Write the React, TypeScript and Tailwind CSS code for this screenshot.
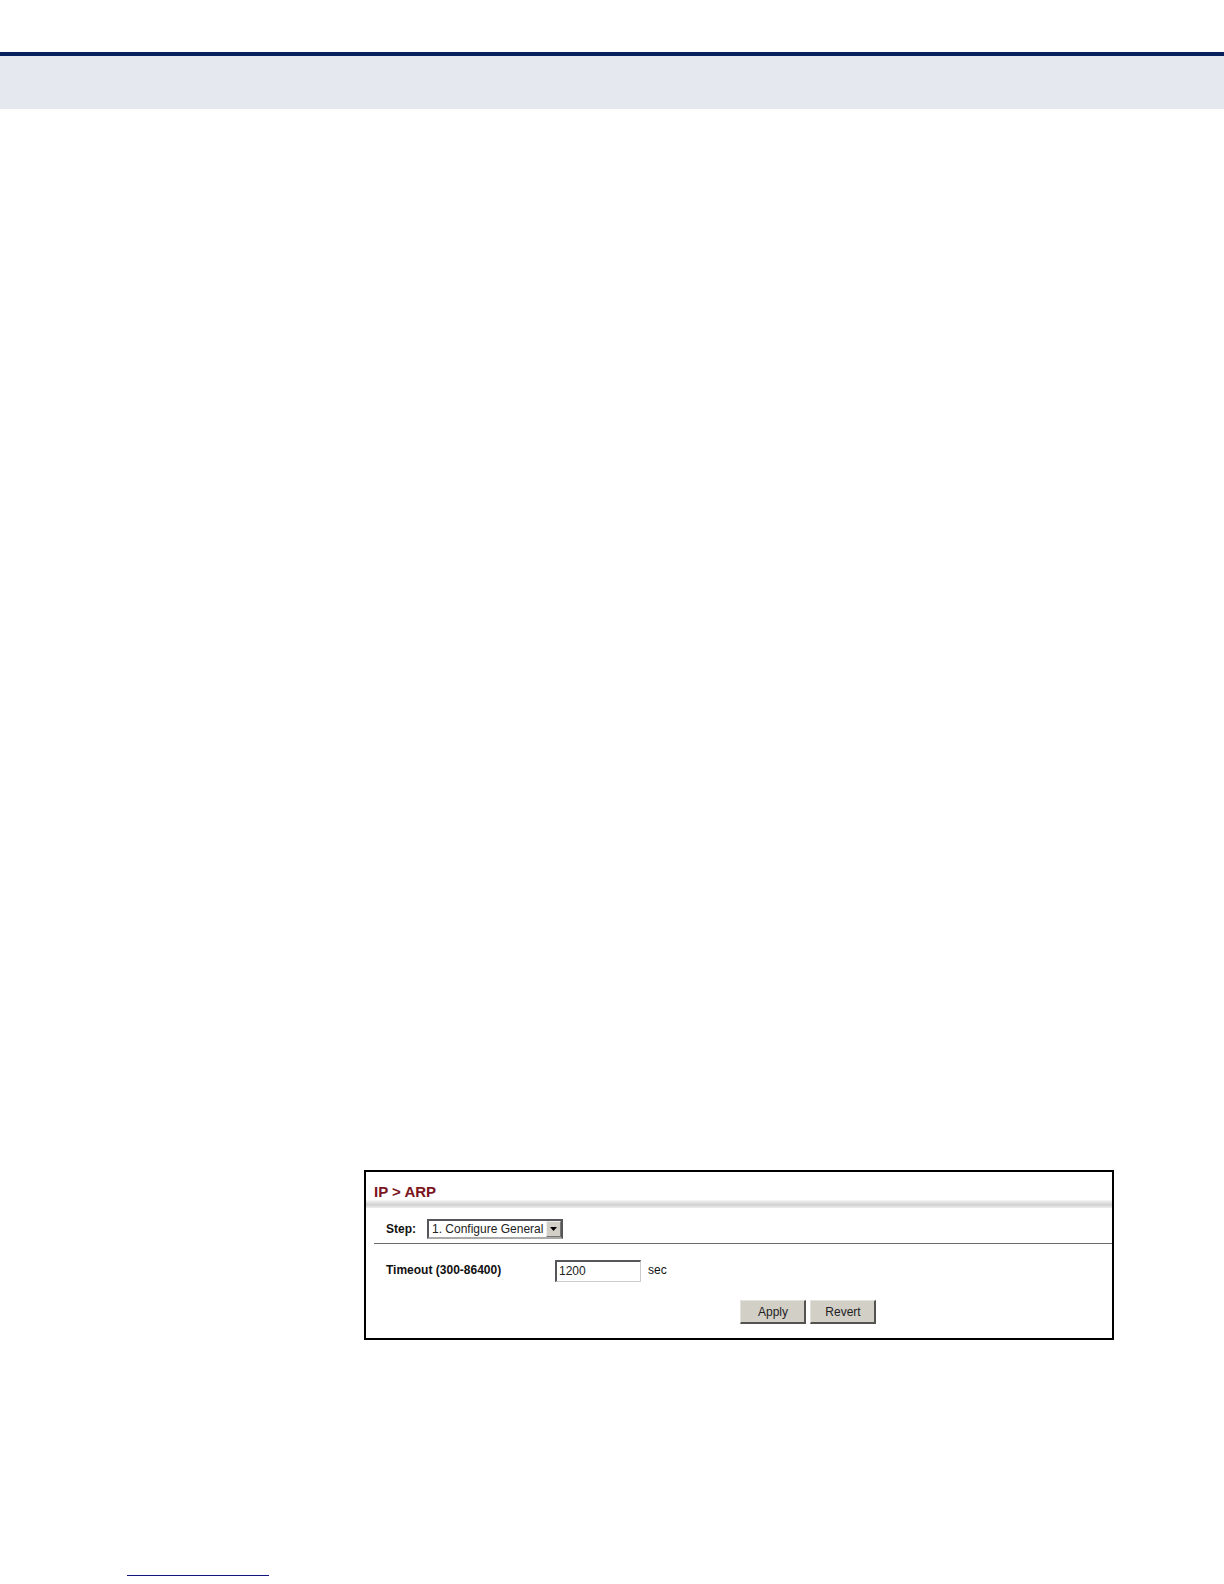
import { useState } from "react";
import type { FormEvent, ReactNode } from "react";

const DEFAULT_TIMEOUT = "1200";

/** Raised grey push button used under the form. */
function PushButton({
  type,
  children,
}: {
  type: "submit" | "reset";
  children: ReactNode;
}) {
  return (
    <button
      type={type}
      className="h-6 w-[66px] border-t border-r-2 border-b-2 border-l border-t-[#e4e2dc] border-r-[#55534f] border-b-[#55534f] border-l-[#e4e2dc] bg-[#d2cfc7] pl-0.5 text-xs text-[#222222]"
    >
      {children}
    </button>
  );
}

function ArpPanel() {
  const [step, setStep] = useState("general");
  const [timeout, setTimeoutValue] = useState(DEFAULT_TIMEOUT);

  const onSubmit = (e: FormEvent) => e.preventDefault();

  return (
    <section className="border-2 border-black bg-white text-xs text-[#111111]">
      <h1 className="pt-3 pl-2 text-[15px] leading-4 font-bold text-[#7a1420]">
        IP &gt; ARP
      </h1>
      <div className="h-2 bg-linear-to-b from-[#f6f6f6] via-[#d0d0d0] via-60% to-[#efefef]" />

      <form
        onSubmit={onSubmit}
        onReset={() => setTimeoutValue(DEFAULT_TIMEOUT)}
      >
        <div className="ml-2 flex items-center border-b border-[#6a6a6a] pt-[11px] pb-1 pl-3">
          <label htmlFor="step" className="w-[41px] font-bold">
            Step:
          </label>
          <div className="relative">
            <select
              id="step"
              value={step}
              onChange={(e) => setStep(e.target.value)}
              className="block h-5 w-[136px] appearance-none rounded-none border-2 border-[#55555a] border-b-[#aaaaaa] bg-white pl-[3px] text-xs leading-4 text-[#222222]"
            >
              <option value="general">1. Configure General</option>
            </select>
            <span className="pointer-events-none absolute top-0.5 right-0.5 flex h-4 w-[15px] items-center justify-center border border-t-[#eeeeee] border-r-[#77756f] border-b-[#77756f] border-l-[#eeeeee] bg-[#d2cfc7]">
              <svg width="7" height="4" viewBox="0 0 7 4" aria-hidden="true">
                <path d="M0 0h7L3.5 4z" fill="#000000" />
              </svg>
            </span>
          </div>
        </div>

        <div className="flex items-center pt-4 pl-5">
          <label htmlFor="timeout" className="w-[169px] pb-0.5 font-bold">
            Timeout (300-86400)
          </label>
          <input
            id="timeout"
            type="text"
            value={timeout}
            onChange={(e) => setTimeoutValue(e.target.value)}
            className="h-[22px] w-[86px] border-t-2 border-r border-b border-l-2 border-t-[#55555a] border-r-[#cccccc] border-b-[#cccccc] border-l-[#55555a] bg-white px-0.5 pb-0.5 text-xs text-[#222222]"
          />
          <span className="ml-[7px] pb-0.5">sec</span>
        </div>

        <div className="flex justify-center gap-1 pt-[18px] pb-[14px] pl-[137px]">
          <PushButton type="submit">Apply</PushButton>
          <PushButton type="reset">Revert</PushButton>
        </div>
      </form>
    </section>
  );
}

export default function App() {
  return (
    <div className="flex min-h-screen flex-col bg-white font-['Liberation_Sans',Arial,sans-serif]">
      <header className="mt-[52px] h-[57px] border-t-4 border-[#07215f] bg-[#e5e8ef]" />

      <main className="flex flex-1 flex-col justify-end pr-[110px] pb-[235px] pl-[364px]">
        <ArpPanel />
      </main>

      <footer className="pb-2 pl-[127px]">
        <hr className="h-px w-[142px] border-0 bg-[#151580]" />
      </footer>
    </div>
  );
}
